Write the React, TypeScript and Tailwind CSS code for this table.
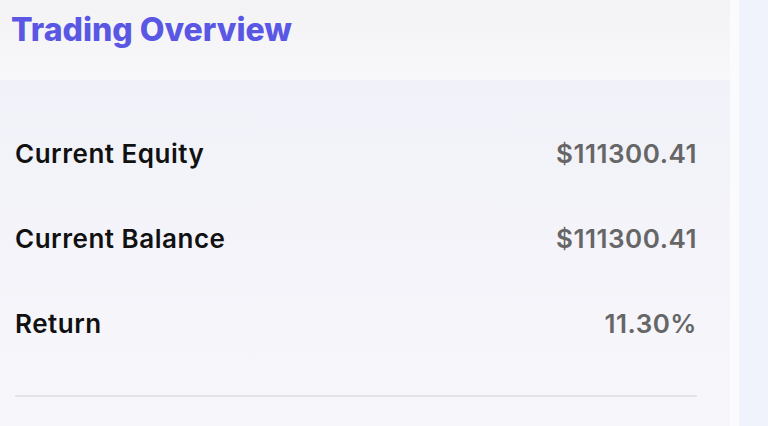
import React from 'react';

const rows = [
  { label: 'Current Equity', value: '$111300.41' },
  { label: 'Current Balance', value: '$111300.41' },
  { label: 'Return', value: '11.30%' },
];

const App: React.FC = () => {
  return (
    <div
      className="flex h-[426px] w-[768px] overflow-hidden bg-[#f4f4f8]"
      style={{ fontFamily: 'Inter, "Noto Sans", sans-serif' }}
    >
      <div className="flex w-[730px] flex-col">
        {/* Header */}
        <div className="h-[80px] bg-gradient-to-b from-[#f3f3f6] to-[#f8f8fa] pl-[11px] pt-[10px]">
          <h1 className="text-[32px] font-extrabold leading-[40px] text-[#5a57e4]">Trading Overview</h1>
        </div>

        {/* Card */}
        <div className="flex-1 bg-gradient-to-b from-[#f1f1f9] to-[#f7f7fb] pl-[15px] pr-[33px] pt-[31px]">
          {rows.map((row) => (
            <div key={row.label} className="flex h-[85px] items-center justify-between">
              <span className="text-[26px] font-semibold tracking-[0.02em] text-[#111111]">{row.label}</span>
              <span className="text-[26px] font-semibold tracking-[0.02em] text-[#666666]">{row.value}</span>
            </div>
          ))}
          <div className="mt-[29px] h-[2px] bg-[#e3e3ea]" />
        </div>
      </div>
      <div className="w-[9px] bg-[#fbfbfd]" />
      <div className="flex-1 bg-[#f1f3fc]" />
    </div>
  );
};

export default App;
